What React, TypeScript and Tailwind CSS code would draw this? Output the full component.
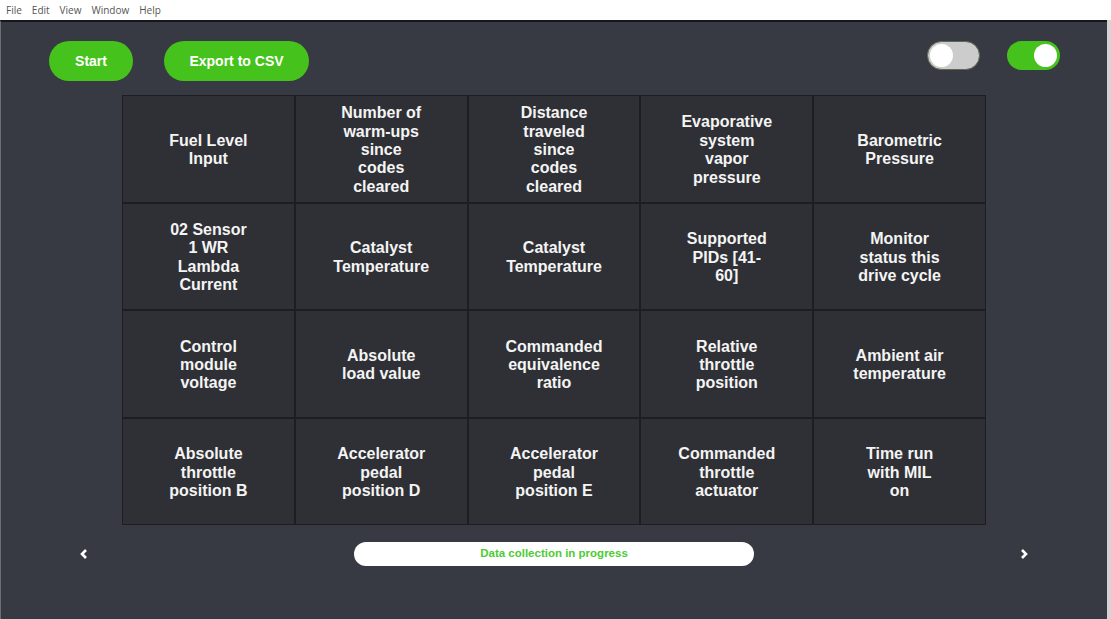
import React from "react";

const cells: string[][] = [
  ["Fuel Level", "Input"],
  ["Number of", "warm-ups", "since", "codes", "cleared"],
  ["Distance", "traveled", "since", "codes", "cleared"],
  ["Evaporative", "system", "vapor", "pressure"],
  ["Barometric", "Pressure"],
  ["02 Sensor", "1 WR", "Lambda", "Current"],
  ["Catalyst", "Temperature"],
  ["Catalyst", "Temperature"],
  ["Supported", "PIDs [41-", "60]"],
  ["Monitor", "status this", "drive cycle"],
  ["Control", "module", "voltage"],
  ["Absolute", "load value"],
  ["Commanded", "equivalence", "ratio"],
  ["Relative", "throttle", "position"],
  ["Ambient air", "temperature"],
  ["Absolute", "throttle", "position B"],
  ["Accelerator", "pedal", "position D"],
  ["Accelerator", "pedal", "position E"],
  ["Commanded", "throttle", "actuator"],
  ["Time run", "with MIL", "on"],
];

function Toggle({ on }: { on: boolean }) {
  return (
    <div
      className={
        on
          ? "flex h-[29px] w-[53px] items-center justify-end rounded-full bg-[#45c21c] px-[3px]"
          : "flex h-[29px] w-[53px] items-center justify-start rounded-full border border-[#5a6a52] bg-[#cccccc] px-[2px]"
      }
    >
      <div className="h-[23px] w-[23px] rounded-full bg-white" />
    </div>
  );
}

export default function App() {
  return (
    <div className="flex h-[619px] w-[1111px] flex-col overflow-hidden bg-white font-['Liberation_Sans',Arial,sans-serif]">
      {/* menu bar */}
      <div className="flex h-[20px] items-center gap-[10px] pl-[6px] font-['Open_Sans',sans-serif] text-[10px] text-[#555]">
        <span>File</span>
        <span>Edit</span>
        <span>View</span>
        <span>Window</span>
        <span>Help</span>
      </div>

      <div className="flex flex-1">
        <main className="flex w-[1107px] flex-col border-t-2 border-l border-t-[#15161a] border-l-[#6b6e74] bg-[#373a42]">
          {/* top controls */}
          <div className="mt-[19px] flex h-[40px] items-center justify-between pl-[48px] pr-[47px]">
            <div className="flex items-center gap-[31px]">
              <button className="h-[40px] w-[84px] rounded-full bg-[#45c21c] text-[14px] font-bold text-white">
                Start
              </button>
              <button className="h-[40px] w-[145px] rounded-full bg-[#45c21c] text-[14px] font-bold text-white">
                Export to CSV
              </button>
            </div>
            <div className="-mt-[11px] flex items-center gap-[27px]">
              <Toggle on={false} />
              <Toggle on={true} />
            </div>
          </div>

          {/* data grid */}
          <div className="mx-auto mt-[14px] grid w-[864px] grid-cols-5 gap-[2px] border border-[#1d1e21] bg-[#1d1e21]">
            {cells.map((lines, i) => (
              <div
                key={i}
                className="flex h-[105.5px] flex-col items-center justify-center pt-[3px] bg-[#2f3035] text-center text-[16px] font-bold leading-[18.4px] text-[#f4f4f4]"
              >
                {lines.map((l, j) => (
                  <span key={j} className="whitespace-nowrap">
                    {l}
                  </span>
                ))}
              </div>
            ))}
          </div>

          {/* footer */}
          <div className="mx-auto mt-[17px] flex w-[948px] items-center justify-between">
            <svg width="8" height="12" viewBox="0 0 8 12" className="text-white">
              <path d="M6 2 L2 6 L6 10" fill="none" stroke="currentColor" strokeWidth="2.6" strokeLinejoin="miter" />
            </svg>
            <div className="flex h-[24px] w-[400px] items-center justify-center rounded-full bg-white text-[11.5px] font-bold text-[#4ccb34]">
              Data collection in progress
            </div>
            <svg width="8" height="12" viewBox="0 0 8 12" className="text-white">
              <path d="M2 2 L6 6 L2 10" fill="none" stroke="currentColor" strokeWidth="2.6" strokeLinejoin="miter" />
            </svg>
          </div>
        </main>
        <div className="w-[4px] bg-[#d4d4d4]" />
      </div>
    </div>
  );
}
